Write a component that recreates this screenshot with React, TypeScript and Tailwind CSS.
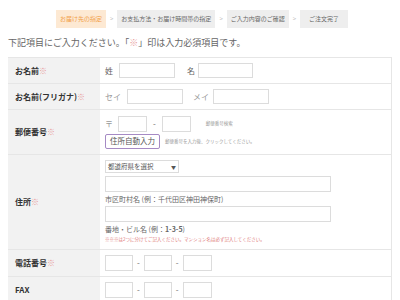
import React from 'react';

const jp = { fontFamily: '"Noto Sans CJK JP", "Noto Sans", sans-serif' };

// Order steps
const steps = ['お届け先の指定', 'お支払方法・お届け時間帯の指定', 'ご入力内容のご確認', 'ご注文完了'];

function Req() {
  return <span className="text-[#e89a9a]">※</span>;
}

function Box({ w, h = 'h-[15px]' }: { w: string; h?: string }) {
  return <div className={`${w} ${h} border border-[#dcdcdc] bg-white`} />;
}

function Row({
  label,
  required,
  h,
  children,
}: {
  label: string;
  required?: boolean;
  h: string;
  children: React.ReactNode;
}) {
  return (
    <div className={`flex ${h} border-b border-[#e6e6e6]`}>
      <div className="flex w-[92px] shrink-0 items-center bg-[#f2f2f2] pl-[7px] text-[8px] font-bold text-[#333]">
        {label}
        {required && <Req />}
      </div>
      <div className="flex flex-1 flex-col justify-center border-r border-[#e6e6e6] pl-[5px] text-[8px] text-[#666]">
        {children}
      </div>
    </div>
  );
}

function Tel() {
  return (
    <div className="flex items-center">
      <Box w="w-[28px]" h="h-[16px]" />
      <span className="mx-[4px]">-</span>
      <Box w="w-[28px]" h="h-[16px]" />
      <span className="mx-[4px]">-</span>
      <Box w="w-[29px]" h="h-[16px]" />
    </div>
  );
}

export default function App() {
  return (
    <div className="h-[300px] w-[400px] overflow-hidden bg-white" style={jp}>
      {/* Step bar */}
      <div className="flex h-[36px] items-center pl-[56px] pt-[1px] text-[6px]">
        {steps.map((s, i) => (
          <React.Fragment key={s}>
            {i > 0 && <span className="px-[4px] text-[#bbb]">&gt;</span>}
            <div
              className={`flex h-[18px] items-center ${
                i === 0 ? 'bg-[#fde9d3] text-[#f2a04a]' : 'bg-[#eeeeee] text-[#666]'
              } ${i === 3 ? 'px-[9px]' : 'px-[4px]'}`}
            >
              {s}
            </div>
          </React.Fragment>
        ))}
      </div>

      <p className="pl-[8px] text-[9px] leading-[14px] text-[#666]">
        下記項目にご入力ください。「<Req />」印は入力必須項目です。
      </p>

      <div className="mx-[8px] mt-[7px] border-t border-[#e6e6e6]">
        <Row label="お名前" required h="h-[26px]">
          <div className="flex items-center">
            <span className="w-[14px]">姓</span>
            <Box w="w-[56px]" />
            <span className="ml-[12px] w-[11px]">名</span>
            <Box w="w-[55px]" />
          </div>
        </Row>
        <Row label="お名前(フリガナ)" required h="h-[26px]">
          <div className="flex items-center">
            <span className="w-[22px] text-[#999]">セイ</span>
            <Box w="w-[56px]" />
            <span className="ml-[10px] w-[20px] text-[#999]">メイ</span>
            <Box w="w-[56px]" />
          </div>
        </Row>
        <Row label="郵便番号" required h="h-[45px]">
          <div className="flex items-center">
            <span className="w-[13px] text-[#999]">〒</span>
            <Box w="w-[29px]" h="h-[16px]" />
            <span className="mx-[6px]">-</span>
            <Box w="w-[29px]" h="h-[16px]" />
            <span className="ml-[15px] text-[4.5px] text-[#999]">郵便番号検索</span>
          </div>
          <div className="mt-[2px] flex items-center">
            <div className="flex h-[15px] items-center rounded-[2px] border border-[#a58ac4] px-[4px] text-[7.5px] text-[#555]">
              住所自動入力
            </div>
            <span className="ml-[5px] text-[4.5px] text-[#999]">郵便番号を入力後、クリックしてください。</span>
          </div>
        </Row>
        <Row label="住所" required h="h-[95px]">
          <div className="flex h-[13px] w-[74px] items-center justify-between border border-[#dcdcdc] px-[2px] text-[6.5px] text-[#555]">
            <span>都道府県を選択</span>
            <span className="text-[5px]">▼</span>
          </div>
          <div className="mt-[3px] h-[16px] w-[226px] border border-[#dcdcdc]" />
          <div className="mt-[1px] text-[7px] leading-[12px] text-[#666]">市区町村名 (例：千代田区神田神保町)</div>
          <div className="mt-[1px] h-[16px] w-[226px] border border-[#dcdcdc]" />
          <div className="mt-[1px] text-[7px] leading-[12px] text-[#666]">
            番地・ビル名 (例：<span className="font-bold">1-3-5</span>)
          </div>
          <div className="text-[4.5px] leading-[9px] text-[#e07a7a]">
            ※※※は2つに分けてご記入ください。マンション名は必ず記入してください。
          </div>
        </Row>
        <Row label="電話番号" required h="h-[27px]">
          <Tel />
        </Row>
        <Row label="FAX" h="h-[27px]">
          <Tel />
        </Row>
      </div>
    </div>
  );
}
